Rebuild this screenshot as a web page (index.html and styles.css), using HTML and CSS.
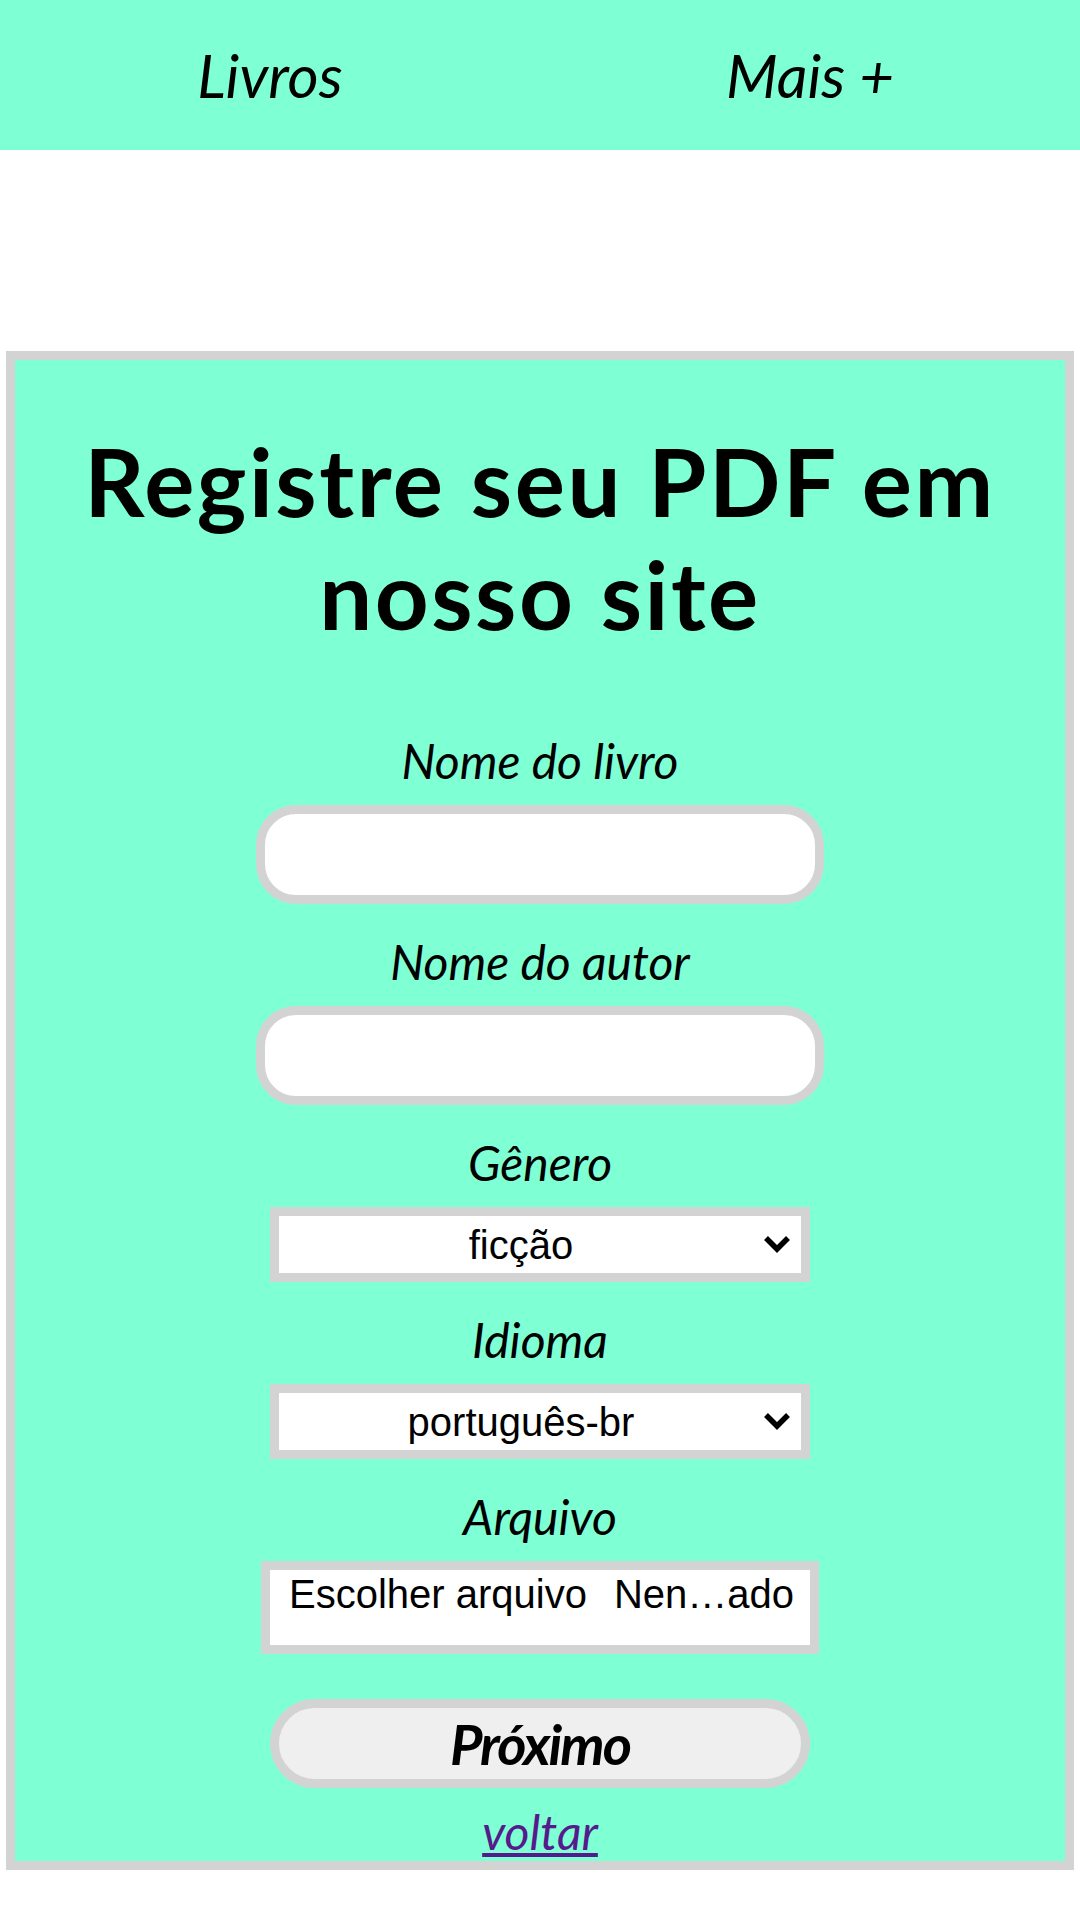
FILE: index.html
```html
<!DOCTYPE html>
<html lang="pt-BR">
<head>
<meta charset="utf-8">
<title>Registre seu PDF</title>
<link rel="stylesheet" href="styles.css">
</head>
<body>
<nav class="topnav">
  <a class="navlink" href="#">Livros</a>
  <a class="navlink" href="#">Mais +</a>
</nav>
<main class="card">
  <h1 class="title">Registre seu PDF em nosso site</h1>
  <form class="form">
    <label class="lbl" for="livro">Nome do livro</label>
    <input class="text-in" id="livro" type="text">
    <label class="lbl" for="autor">Nome do autor</label>
    <input class="text-in" id="autor" type="text">
    <label class="lbl" for="genero">Gênero</label>
    <div class="sel-wrap">
      <select class="sel" id="genero">
        <option>ficção</option>
      </select>
      <svg class="chev" width="28" height="18" viewBox="0 0 28 18" aria-hidden="true"><polyline points="3,3 14,14 25,3" fill="none" stroke="#000" stroke-width="5.5"/></svg>
    </div>
    <label class="lbl" for="idioma">Idioma</label>
    <div class="sel-wrap">
      <select class="sel" id="idioma">
        <option>português-br</option>
      </select>
      <svg class="chev" width="28" height="18" viewBox="0 0 28 18" aria-hidden="true"><polyline points="3,3 14,14 25,3" fill="none" stroke="#000" stroke-width="5.5"/></svg>
    </div>
    <span class="lbl">Arquivo</span>
    <label class="file-in">
      <input class="file-hidden" type="file">
      <span class="file-btn">Escolher arquivo</span>
      <span class="file-name">Nen…ado</span>
    </label>
    <button class="next" type="button">Próximo</button>
    <a class="back" href="#">voltar</a>
  </form>
</main>
</body>
</html>
```
FILE: styles.css
```css
html, body {
  margin: 0;
  padding: 0;
  background: #ffffff;
}
body {
  font-family: Lato, "Open Sans", sans-serif;
  color: #000;
}
.topnav {
  display: flex;
  height: 150px;
  align-items: center;
  background: #7fffd4;
}
.navlink {
  flex: 1;
  text-align: center;
  font-style: italic;
  font-size: 60px;
  color: #000;
  text-decoration: none;
}
.card {
  margin: 201px 6px 0;
  border: 9px solid #d3d3d3;
  background: #7fffd4;
}
.title {
  margin: 64px 10px 82px;
  text-align: center;
  font-family: Lato, sans-serif;
  font-weight: 700;
  font-size: 94px;
  line-height: 113px;
  letter-spacing: 2.5px;
}
.form {
  display: flex;
  flex-direction: column;
  align-items: center;
}
.lbl {
  display: block;
  font-style: italic;
  font-size: 48px;
  line-height: 58px;
  margin-bottom: 15px;
}
.text-in {
  box-sizing: border-box;
  width: 568px;
  height: 99px;
  border: 9px solid #d3d3d3;
  border-radius: 40px;
  background: #fff;
  margin: 0 0 29px;
  padding: 0 20px;
  font-family: "Liberation Sans", Arial, sans-serif;
  font-size: 40px;
  outline: none;
}
.sel-wrap {
  position: relative;
  width: 540px;
  height: 75px;
  margin: 0 0 29px;
}
.sel {
  -webkit-appearance: none;
  appearance: none;
  box-sizing: border-box;
  display: block;
  width: 540px;
  height: 75px;
  border: 9px solid #d3d3d3;
  border-radius: 0;
  background-color: #fff;
  margin: 0;
  padding: 0 38px 0 0;
  font-family: "Liberation Sans", Arial, sans-serif;
  font-size: 40px;
  line-height: 46px;
  color: #000;
  text-align: center;
  text-align-last: center;
  outline: none;
}
.chev {
  position: absolute;
  right: 19px;
  top: 28px;
  pointer-events: none;
}
.file-in {
  box-sizing: border-box;
  width: 558px;
  height: 93px;
  border: 9px solid #d3d3d3;
  background: #fff;
  margin: 0 0 45px;
  padding: 1px 16px 0 19px;
  display: flex;
  align-items: flex-start;
  justify-content: space-between;
  font-family: "Liberation Sans", Arial, sans-serif;
  font-size: 40px;
  line-height: 46px;
  white-space: nowrap;
  cursor: pointer;
}
.file-hidden {
  display: none;
}
.next {
  box-sizing: border-box;
  width: 540px;
  height: 89px;
  border: 9px solid #d3d3d3;
  border-radius: 45px;
  background: #efefef;
  margin: 0 0 15px;
  padding: 0;
  font-family: Lato, sans-serif;
  font-style: italic;
  font-weight: 700;
  font-size: 56px;
  letter-spacing: -2px;
  color: #000;
}
.back {
  font-style: italic;
  font-size: 48px;
  line-height: 58px;
  color: #551a8b;
  text-decoration: underline;
}
```
